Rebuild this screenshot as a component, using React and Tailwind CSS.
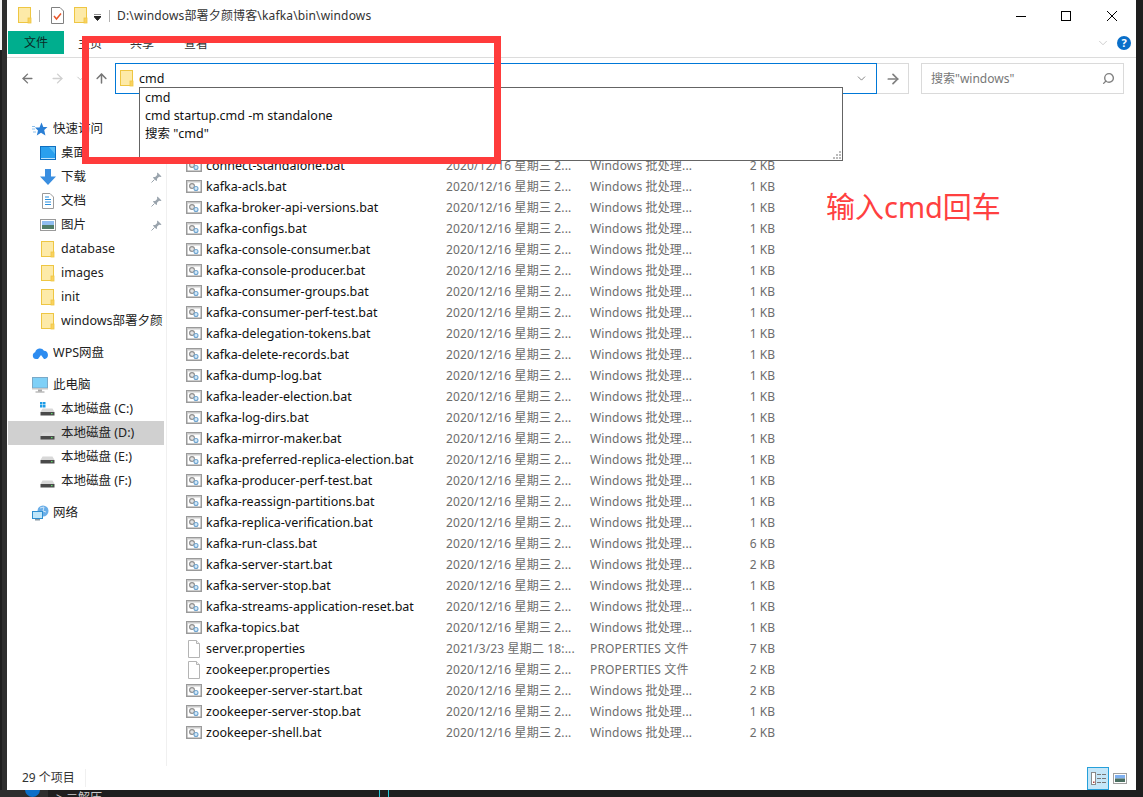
import React from 'react';
import { ArrowLeft, ArrowRight, ArrowUp, ChevronDown, Search } from 'lucide-react';

const bat = (name, size) => ({ name, size, date: '2020/12/16 星期三 2...', type: 'Windows 批处理...', icon: 'bat' });

const files = [
    bat('connect-distributed.bat', '2 KB'),
    bat('connect-standalone.bat', '2 KB'),
    bat('kafka-acls.bat', '1 KB'),
    bat('kafka-broker-api-versions.bat', '1 KB'),
    bat('kafka-configs.bat', '1 KB'),
    bat('kafka-console-consumer.bat', '1 KB'),
    bat('kafka-console-producer.bat', '1 KB'),
    bat('kafka-consumer-groups.bat', '1 KB'),
    bat('kafka-consumer-perf-test.bat', '1 KB'),
    bat('kafka-delegation-tokens.bat', '1 KB'),
    bat('kafka-delete-records.bat', '1 KB'),
    bat('kafka-dump-log.bat', '1 KB'),
    bat('kafka-leader-election.bat', '1 KB'),
    bat('kafka-log-dirs.bat', '1 KB'),
    bat('kafka-mirror-maker.bat', '1 KB'),
    bat('kafka-preferred-replica-election.bat', '1 KB'),
    bat('kafka-producer-perf-test.bat', '1 KB'),
    bat('kafka-reassign-partitions.bat', '1 KB'),
    bat('kafka-replica-verification.bat', '1 KB'),
    bat('kafka-run-class.bat', '6 KB'),
    bat('kafka-server-start.bat', '2 KB'),
    bat('kafka-server-stop.bat', '1 KB'),
    bat('kafka-streams-application-reset.bat', '1 KB'),
    bat('kafka-topics.bat', '1 KB'),
    { name: 'server.properties', size: '7 KB', date: '2021/3/23 星期二 18:...', type: 'PROPERTIES 文件', icon: 'file' },
    { name: 'zookeeper.properties', size: '2 KB', date: '2020/12/16 星期三 2...', type: 'PROPERTIES 文件', icon: 'file' },
    bat('zookeeper-server-start.bat', '2 KB'),
    bat('zookeeper-server-stop.bat', '1 KB'),
    bat('zookeeper-shell.bat', '2 KB'),
];

const FolderIcon = () => (
    <svg width="14" height="17" viewBox="0 0 14 17" className="shrink-0">
        <rect x="0.5" y="0.5" width="12" height="15" fill="#fdeaa8" stroke="#eec643" />
        <rect x="10" y="11" width="3" height="5" fill="#fbd25e" stroke="#eec643" strokeWidth="0.8" />
    </svg>
);

const CheckDocIcon = () => (
    <svg width="13" height="17" viewBox="0 0 13 17" className="shrink-0">
        <path d="M0.5 0.5H9L12.5 4V16.5H0.5Z" fill="#fff" stroke="#808080" />
        <path d="M3 9L5.5 12L10 6.5" fill="none" stroke="#e8562a" strokeWidth="1.5" />
    </svg>
);

const BatIcon = () => (
    <svg width="16" height="13" viewBox="0 0 16 13" className="shrink-0">
        <rect x="0.75" y="0.75" width="14.5" height="11.5" fill="#fff" stroke="#9a9a9a" strokeWidth="1.5" />
        <rect x="1" y="1" width="14" height="1.5" fill="#c9c9c9" />
        <circle cx="6" cy="6" r="2.4" fill="#e4e4e4" stroke="#8f8f8f" strokeWidth="1.2" />
        <circle cx="10" cy="8.5" r="2" fill="#d6e9f8" stroke="#6fa5d0" strokeWidth="1.1" />
    </svg>
);

const FileIcon = () => (
    <svg width="16" height="18" viewBox="0 0 16 18" className="shrink-0">
        <path d="M2.5 0.5H10.5L13.5 3.5V17.5H2.5Z" fill="#fff" stroke="#b4b4b4" />
        <path d="M10.5 0.5V3.5H13.5" fill="#f2f2f2" stroke="#b4b4b4" />
    </svg>
);

const StarIcon = () => (
    <svg width="16" height="15" viewBox="0 0 16 15" className="shrink-0">
        <path d="M9.5 0.5L11.3 5H15.5L12.2 8L13.4 13.5L9 10.7L4.8 13.5L6 8.5L3 5.5H7.5Z" fill="#2a7fd5" />
        <path d="M0 7H3M1 10H4M0 4.5H3" stroke="#8dc0ec" strokeWidth="1" />
    </svg>
);

const DesktopIcon = () => (
    <svg width="16" height="14" viewBox="0 0 16 14" className="shrink-0">
        <rect x="0.5" y="0.5" width="15" height="13" fill="#2aa0ee" stroke="#0f6fc0" />
        <path d="M1 12.5H15" stroke="#bfe4fb" />
        <path d="M9 1H15V8Z" fill="#59bdf6" />
    </svg>
);

const DownloadIcon = () => (
    <svg width="16" height="16" viewBox="0 0 16 16" className="shrink-0">
        <path d="M5 0H11V7.5H16L8 16L0 7.5H5Z" fill="#3a8ee0" />
    </svg>
);

const DocsIcon = () => (
    <svg width="12" height="16" viewBox="0 0 12 16" className="shrink-0">
        <path d="M0.5 0.5H8L11.5 4V15.5H0.5Z" fill="#fff" stroke="#9a9a9a" />
        <path d="M3 4H7M3 6.5H9M3 9H9M3 11.5H9" stroke="#2a8fdc" strokeWidth="1" />
    </svg>
);

const PicturesIcon = () => (
    <svg width="16" height="12" viewBox="0 0 16 12" className="shrink-0">
        <rect x="0.5" y="0.5" width="15" height="11" fill="#fff" stroke="#9a9a9a" />
        <rect x="2" y="2" width="12" height="4" fill="#8fbdf0" />
        <rect x="2" y="6" width="12" height="4" fill="#4f7d68" />
    </svg>
);

const PinIcon = () => (
    <svg width="11" height="11" viewBox="0 0 11 11" className="shrink-0">
        <path d="M6.5 0.5L10.5 4.5L9.5 5L8 4.8L6 6.8L6 8.5L5.3 9L2 5.7L2.5 5H4.2L6.2 3L6 1.5Z" fill="#9aa4ad" />
        <path d="M3.5 7.5L0.5 10.5" stroke="#9aa4ad" />
    </svg>
);

const CloudIcon = () => (
    <svg width="17" height="12" viewBox="0 0 17 12" className="shrink-0">
        <path d="M4 12A3.5 3.5 0 0 1 3.2 5.2A4.8 4.8 0 0 1 12 3.8A4.2 4.2 0 0 1 13 12Z" fill="#2d8cf0" />
        <path d="M6 12L9 8L12 12Z" fill="#fff" />
    </svg>
);

const PcIcon = () => (
    <svg width="16" height="16" viewBox="0 0 16 16" className="shrink-0">
        <rect x="0.5" y="0.5" width="15" height="10.5" fill="#7fd0f7" stroke="#7aa9c8" />
        <rect x="0" y="11" width="16" height="1.5" fill="#c8c8c8" />
        <rect x="6" y="12.5" width="4" height="2" fill="#aaa" />
        <rect x="3.5" y="14.5" width="9" height="1" fill="#9a9a9a" />
    </svg>
);

const DriveIcon = ({ system }) => (
    <svg width="15" height="14" viewBox="0 0 15 14" className="shrink-0">
        {system && (
            <g fill="#1c9be6">
                <rect x="0" y="0" width="2.5" height="2.5" />
                <rect x="3" y="0" width="2.5" height="2.5" />
                <rect x="0" y="3" width="2.5" height="2.5" />
                <rect x="3" y="3" width="2.5" height="2.5" />
            </g>
        )}
        <path d="M2.5 6.5H12.5L14.5 10H0.5Z" fill="#d8d8d8" />
        <rect x="0.5" y="10" width="14" height="3.5" fill="#4a4a4a" />
        <rect x="11" y="11" width="1.5" height="1.2" fill="#5fdc6a" />
    </svg>
);

const NetworkIcon = () => (
    <svg width="17" height="16" viewBox="0 0 17 16" className="shrink-0">
        <circle cx="11" cy="6" r="5.5" fill="#6aaee8" />
        <path d="M8 3L12 2L11 6L14 7" stroke="#cfe6f8" fill="none" />
        <rect x="0.5" y="6.5" width="10" height="7" fill="#bfe6fa" stroke="#2f8fd0" />
        <rect x="3" y="14" width="5" height="1.5" fill="#8a9aa5" />
    </svg>
);

const NavItem = ({ icon, label, indent, selected, pin, className = '' }) => (
    <div className={`flex h-6 items-center overflow-hidden whitespace-nowrap ${selected ? 'mr-[2px] ml-px bg-[#d0d0d0]' : ''} ${className}`}>
        <div className={`flex shrink-0 items-center justify-center ${indent ? (selected ? 'ml-[31px] w-[17px]' : 'ml-[32px] w-[17px]') : 'ml-[24px] w-[18px]'}`}>{icon}</div>
        <span className={`min-w-0 flex-1 overflow-hidden text-[12.5px] leading-[24px] ${indent ? 'ml-[5px]' : 'ml-[4px]'}`}>{label}</span>
        {pin && <div className="mr-[4px] ml-1"><PinIcon /></div>}
    </div>
);

const FileRow = ({ file }) => (
    <div className="grid h-[21px] grid-cols-[260px_144px_125px_60px] items-center whitespace-nowrap leading-[21px]">
        <div className="flex items-center gap-1">
            {file.icon === 'bat' ? <BatIcon /> : <FileIcon />}
            <span className="text-[12.5px] text-[#111]">{file.name}</span>
        </div>
        <div className="tracking-[0.15px] text-[#6d6d6d]">{file.date}</div>
        <div className="tracking-[0.15px] text-[#6d6d6d]">{file.type}</div>
        <div className="text-right text-[#6d6d6d]">{file.size}</div>
    </div>
);

const App = () => {
    return (
        <div className="relative flex h-[797px] w-[1143px] flex-col overflow-hidden bg-[#1e1e1e] font-['Noto_Sans','Noto_Sans_CJK_SC',sans-serif] text-[12px] leading-[18px] text-[#222]">
            <div className="flex h-[790px] shrink-0">
                {/* bits of the window behind */}
                <div className="flex w-[7px] shrink-0">
                    <div className="h-[50px] w-[2px] bg-[#f2f2f2]" />
                    <div className="flex-1 bg-[#2e2e2e]" />
                </div>

                <div className="flex min-w-0 flex-1 flex-col bg-white">
                    {/* title bar */}
                    <div className="flex h-[31px] shrink-0 items-center">
                        <div className="ml-[11px]"><FolderIcon /></div>
                        <div className="ml-[7px] h-3 w-px bg-[#b0b0b0]" />
                        <div className="ml-[11px]"><CheckDocIcon /></div>
                        <div className="ml-[10px]"><FolderIcon /></div>
                        <svg width="7" height="7" viewBox="0 0 7 7" className="ml-[6px] mt-[3px]">
                            <path d="M0 0H7M0 2.5H7L3.5 6.5Z" stroke="#222" fill="#222" strokeWidth="1" />
                        </svg>
                        <div className="ml-[8px] h-3 w-px bg-[#b0b0b0]" />
                        <div className="ml-[7px] tracking-[0.15px] text-[#333]">D:\windows部署夕颜博客\kafka\bin\windows</div>
                        <div className="ml-auto flex items-center">
                            <div className="flex w-[46px] justify-center pr-[2px]">
                                <svg width="10" height="10" viewBox="0 0 10 10"><path d="M0 5.5H10" stroke="#000" /></svg>
                            </div>
                            <div className="flex w-[45px] justify-center pr-[3px]">
                                <svg width="10" height="10" viewBox="0 0 10 10"><rect x="0.5" y="0.5" width="9" height="9" fill="none" stroke="#000" /></svg>
                            </div>
                            <div className="flex w-[46px] justify-center pr-[2px]">
                                <svg width="10" height="10" viewBox="0 0 10 10"><path d="M0 0L10 10M10 0L0 10" stroke="#000" /></svg>
                            </div>
                        </div>
                    </div>

                    {/* ribbon tabs */}
                    <div className="mr-0 flex h-[27px] shrink-0 border-b border-[#dcdcdc]">
                        <div className="ml-px flex h-[23px] w-[56px] items-center justify-center bg-[#00ae8e] text-[#0b2b26]">文件</div>
                        <div className="mt-[4px] ml-[14px] w-[24px] text-[#333]">主页</div>
                        <div className="mt-[4px] ml-[28px] w-[24px] text-[#333]">共享</div>
                        <div className="mt-[4px] ml-[30px] w-[24px] text-[#333]">查看</div>
                        <div className="ml-auto flex items-center pr-[5px] pb-[3px]">
                            <ChevronDown size={14} strokeWidth={1} color="#aaa" />
                            <div className="ml-[7px] flex h-[14px] w-[14px] items-center justify-center rounded-full bg-[#0a6fc9] text-[11px] font-bold text-white">?</div>
                        </div>
                    </div>

                    {/* address row */}
                    <div className="flex h-[42px] shrink-0 items-start pt-[5px]">
                        <div className="flex h-[31px] w-[108px] shrink-0 items-center">
                            <div className="ml-[13px]"><ArrowLeft size={15} strokeWidth={2.2} color="#777" /></div>
                            <div className="ml-[15px]"><ArrowRight size={15} strokeWidth={2.2} color="#d0d0d0" /></div>
                            <div className="ml-[10px]"><ChevronDown size={11} strokeWidth={1.5} color="#aaa" /></div>
                            <div className="ml-[8px]"><ArrowUp size={15} strokeWidth={2.4} color="#777" /></div>
                        </div>
                        <div className="flex h-[31px] w-[762px] shrink-0 items-center border border-[#0078d7] pl-[4px]">
                            <FolderIcon />
                            <span className="ml-[5px] text-[12.5px] text-[#111]">cmd</span>
                            <div className="mr-[8px] ml-auto"><ChevronDown size={13} strokeWidth={1.2} color="#444" /></div>
                        </div>
                        <div className="flex h-[31px] w-[32px] shrink-0 items-center justify-center border border-l-0 border-[#dadada]">
                            <ArrowRight size={16} strokeWidth={2.6} color="#808080" />
                        </div>
                        <div className="ml-[12px] flex h-[31px] w-[203px] shrink-0 items-center border border-[#dadada] pr-[8px] pl-[9px] text-[#777]">
                            搜索"windows"
                            <Search size={13} strokeWidth={2.6} color="#808080" className="ml-auto -scale-x-100" />
                        </div>
                    </div>

                    {/* sidebar and file list */}
                    <div className="flex min-h-0 flex-1">
                        <div className="flex w-[160px] shrink-0 flex-col border-r border-[#f0f0f0] pt-[17px]">
                            <NavItem icon={<StarIcon />} label="快速访问" />
                            <NavItem indent icon={<DesktopIcon />} label="桌面" pin />
                            <NavItem indent icon={<DownloadIcon />} label="下载" pin />
                            <NavItem indent icon={<DocsIcon />} label="文档" pin />
                            <NavItem indent icon={<PicturesIcon />} label="图片" pin />
                            <NavItem indent icon={<FolderIcon />} label="database" />
                            <NavItem indent icon={<FolderIcon />} label="images" />
                            <NavItem indent icon={<FolderIcon />} label="init" />
                            <NavItem className="pr-[3px]" indent icon={<FolderIcon />} label="windows部署夕颜博客" />
                            <NavItem className="mt-2" icon={<CloudIcon />} label="WPS网盘" />
                            <NavItem className="mt-2" icon={<PcIcon />} label="此电脑" />
                            <NavItem indent icon={<DriveIcon system />} label="本地磁盘 (C:)" />
                            <NavItem indent selected icon={<DriveIcon />} label="本地磁盘 (D:)" />
                            <NavItem indent icon={<DriveIcon />} label="本地磁盘 (E:)" />
                            <NavItem indent icon={<DriveIcon />} label="本地磁盘 (F:)" />
                            <NavItem className="mt-2" icon={<NetworkIcon />} label="网络" />
                        </div>
                        <div className="min-w-0 flex-1 pt-[34px] pl-[19px]">
                            {files.map((file) => <FileRow key={file.name} file={file} />)}
                        </div>
                    </div>

                    {/* status bar */}
                    <div className="flex h-[24px] shrink-0 items-center">
                        <span className="ml-[15px] text-[#333]">29 个项目</span>
                        <div className="ml-[10px] h-[18px] w-px bg-[#f0f0f0]" />
                        <div className="mr-[9px] ml-auto flex items-center gap-[4px]">
                            <div className="flex h-[23px] w-[22px] items-center justify-center border border-[#26a0da] bg-[#c5e6f8]">
                                <svg width="15" height="13" viewBox="0 0 15 13">
                                    <rect x="0.5" y="0.5" width="4" height="12" fill="#fff" stroke="#8a8a8a" />
                                    <path d="M6 2.5H10M11 2.5H15M6 6.5H10M11 6.5H15M6 10.5H10M11 10.5H15" stroke="#777" />
                                    <rect x="2" y="9.5" width="1.5" height="1.5" fill="#b04040" />
                                </svg>
                            </div>
                            <svg width="14" height="11" viewBox="0 0 14 11">
                                <rect x="0.5" y="0.5" width="13" height="10" fill="#fff" stroke="#a0a0a0" />
                                <rect x="2" y="2" width="10" height="3.5" fill="#7fb0f0" />
                                <rect x="2" y="5.5" width="10" height="3.5" fill="#4a6e60" />
                            </svg>
                        </div>
                    </div>
                </div>

                <div className="w-[7px] shrink-0 bg-[#1e1e1e]" />
            </div>

            {/* window behind, bottom edge */}
            <div className="flex min-h-0 flex-1 overflow-hidden leading-none text-[#ccc]">
                <div className="flex w-[48px] shrink-0 justify-end bg-[#2e2e2e] pr-[8px]">
                    <div className="-mt-[8px] h-[15px] w-[15px] rounded-full bg-[#0a6fc9]" />
                </div>
                <div className="ml-[8px] w-[45px] pt-[2px] whitespace-nowrap">&gt; ≡解压</div>
                <div className="ml-[278px] h-full w-px bg-[#25c7d9]" />
                <div className="ml-[8px] h-full w-px bg-[#25c7d9]" />
            </div>

            {/* address bar suggestions */}
            <div className="absolute top-[87px] left-[139px] flex h-[74px] w-[704px] flex-col border border-[#646464] bg-white pt-px pl-[5px] text-[12.5px] text-[#111]">
                <div className="flex h-[18px] items-center">cmd</div>
                <div className="flex h-[18px] items-center">cmd startup.cmd -m standalone</div>
                <div className="flex h-[18px] items-center">搜索 "cmd"</div>
                <svg width="8" height="8" viewBox="0 0 8 8" className="absolute right-px bottom-px" fill="#bbb">
                    <rect x="6" y="0" width="2" height="2" />
                    <rect x="3" y="3" width="2" height="2" />
                    <rect x="6" y="3" width="2" height="2" />
                    <rect x="0" y="6" width="2" height="2" />
                    <rect x="3" y="6" width="2" height="2" />
                    <rect x="6" y="6" width="2" height="2" />
                </svg>
            </div>

            {/* hand drawn annotation */}
            <div className="absolute top-[36px] left-[82px] h-[128px] w-[419px] border-[7px] border-[#ff3b3b]" />
            <div className="absolute top-[190px] left-[826px] whitespace-nowrap text-[29px] leading-[34px] text-[#ff4040]">输入cmd回车</div>
        </div>
    );
};

export default App;
